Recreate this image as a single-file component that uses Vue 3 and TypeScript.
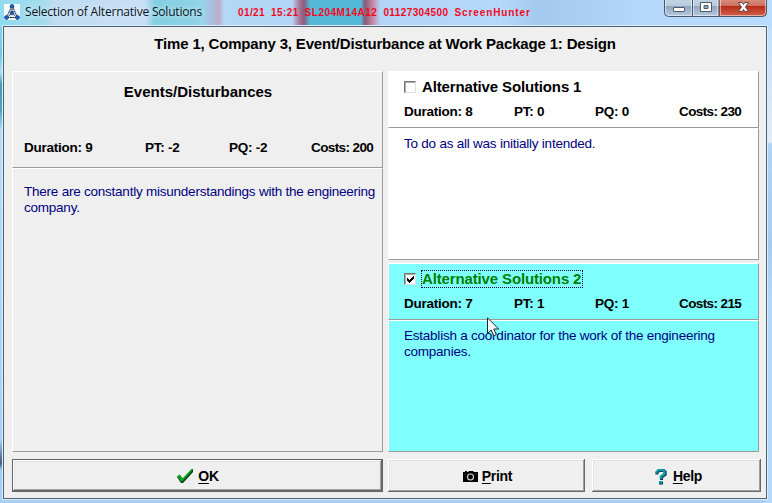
<script setup lang="ts">
import { ref } from 'vue'

interface Stat { label: string; value: number }
interface Solution { title: string; stats: Stat[]; text: string; checked: boolean }

const makeStats = (d: number, pt: number, pq: number, c: number): Stat[] => [
  { label: 'Duration', value: d },
  { label: 'PT', value: pt },
  { label: 'PQ', value: pq },
  { label: 'Costs', value: c },
]

const eventStats = makeStats(9, -2, -2, 200)

const solutions = ref<Solution[]>([
  { title: 'Alternative Solutions 1', stats: makeStats(8, 0, 0, 230), text: 'To do as all was initially intended.', checked: false },
  { title: 'Alternative Solutions 2', stats: makeStats(7, 1, 1, 215), text: 'Establish a coordinator for the work of the engineering companies.', checked: true },
])

function choose(index: number) {
  solutions.value.forEach((s, i) => { s.checked = i === index })
}
</script>

<template>
  <div class="window">
    <header class="titlebar">
      <svg class="app-icon" viewBox="0 0 16 16" width="16" height="16">
        <rect width="16" height="16" fill="#f4fbff" />
        <path d="M7.500 2.500 2.500 13.500H13.500L8.500 2.500M8 9 3 13.500M8 9l5 4.500M8 2v7" fill="none" stroke="#111a24" stroke-width="1" stroke-dasharray="2 .6" />
        <g fill="#1263c8" stroke="#082a66" stroke-width=".6">
          <circle cx="8" cy="2.300" r="1.900" /><circle cx="8" cy="9" r="1.900" />
          <circle cx="2.500" cy="13.500" r="2" /><circle cx="13.500" cy="13.500" r="2" />
        </g>
      </svg>
      <span class="caption">Selection of Alternative Solutions</span>
      <span class="stamp"><span>01/21</span><span>15:21</span><span class="code">SL204M14A12</span><span>01127304500</span><span class="tool">ScreenHunter</span></span>
      <svg class="controls" viewBox="0 0 104 18" width="104" height="18">
        <defs>
          <linearGradient id="glass" x1="0" y1="0" x2="0" y2="1">
            <stop offset="0" stop-color="#c3d3e3" /><stop offset=".38" stop-color="#b7cade" />
            <stop offset=".42" stop-color="#8fa6bf" /><stop offset="1" stop-color="#b4cbe2" />
          </linearGradient>
          <linearGradient id="red" x1="0" y1="0" x2="0" y2="1">
            <stop offset="0" stop-color="#d88f80" /><stop offset=".38" stop-color="#ce7060" />
            <stop offset=".42" stop-color="#b82c17" /><stop offset="1" stop-color="#d2634c" />
          </linearGradient>
        </defs>
        <path d="M.5-1V12.500Q.5 16.500 4.500 16.500H98.500Q102.500 16.500 102.500 12.500V-1Z" fill="url(#glass)" />
        <path d="M55-1H102.500V12.500Q102.500 16.500 98.500 16.500H55Z" fill="url(#red)" />
        <path d="M1.500 0V12Q1.500 15.500 5 15.500H27.500V0M29.500 0V15.500H53.500V0M56.500 0V15.500H98Q101.500 15.500 101.500 12V0" fill="none" stroke="#fff" stroke-opacity=".5" />
        <path d="M.5-1V12.500Q.5 16.500 4.500 16.500H98.500Q102.500 16.500 102.500 12.500V-1M28.500 0V16M55 0V16" fill="none" stroke="#4c5666" />
        <rect x="9.500" y="7.500" width="11" height="4" rx=".5" fill="#fff" stroke="#505a6a" />
        <path d="M36.500 2.500H47.500V11.500H36.500ZM40 5.500H44V8.500H40Z" fill="#fff" fill-rule="evenodd" stroke="#505a6a" />
        <path d="M74.500 2.500H78L79.500 4.500 81 2.500H84.500L81.500 7 84.500 11.500H81L79.500 9.500 78 11.500H74.500L77.500 7Z" fill="#fff" stroke="#5c4a50" />
      </svg>
    </header>

    <main class="client">
      <h1 class="heading">Time 1, Company 3, Event/Disturbance at Work Package 1: Design</h1>

      <div class="columns">
        <section class="stack">
          <div class="panel event-head">
            <h2 class="event-title">Events/Disturbances</h2>
            <div class="stats event-stats">
              <span v-for="s in eventStats" :key="s.label">{{ s.label }}: {{ s.value }}</span>
            </div>
          </div>
          <div class="panel event-body"><p class="text">There are constantly misunderstandings with the engineering company.</p></div>
        </section>

        <div class="solutions">
          <section v-for="(sol, i) in solutions" :key="sol.title" class="stack solution" :class="{ selected: sol.checked }">
            <div class="panel solution-head">
              <div class="choice" @click="choose(i)">
                <span class="box">
                  <svg v-if="sol.checked" viewBox="0 0 9 9" width="9" height="9" shape-rendering="crispEdges">
                    <path d="M1 3v3l2 2 5-5V0L3 5Z" fill="#000" />
                  </svg>
                </span>
                <span class="solution-title">{{ sol.title }}</span>
              </div>
              <div class="stats">
                <span v-for="s in sol.stats" :key="s.label">{{ s.label }}: {{ s.value }}</span>
              </div>
            </div>
            <div class="panel solution-body"><p class="text">{{ sol.text }}</p></div>
          </section>
        </div>
      </div>

      <footer class="buttons">
        <button class="btn ok">
          <svg viewBox="0 0 18 16" width="18" height="16">
            <path d="M1 9l3-2 3 4L16 1h1v3L7 15H5Z" fill="#053b12" />
            <path d="M1 8.500 3.500 6.500 6.500 10.500 15.500 1H16.500V2.500L6.500 13.500H5Z" fill="#08a018" />
          </svg>
          <span><u>O</u>K</span>
        </button>
        <button class="btn print">
          <svg viewBox="0 0 15 11" width="15" height="11">
            <path d="M0 1H2V0H4V1H5L6 0H10L11 1H15V11H0Z" fill="#000" />
            <circle cx="7.500" cy="6" r="3" fill="#000" stroke="#d8d8d8" stroke-width="1.100" />
            <path d="M1 3h2M12 3h2" stroke="#555" stroke-width=".6" />
          </svg>
          <span><u>P</u>rint</span>
        </button>
        <button class="btn help">
          <svg viewBox="0 0 12 17" width="12" height="17">
            <g fill="none" stroke-width="3">
              <path d="M2 6.500V4.500L4 2.500H8.500L10.200 4V6.500L6.500 9V12" stroke="#063a52" />
              <path d="M1.500 5.500V4L3.500 2H8L9.500 3.500V6L5.800 8.500V11" stroke="#079eaa" stroke-width="2.200" />
            </g>
            <rect x="4" y="13.500" width="4" height="3" fill="#063a52" /><rect x="4" y="13" width="3" height="2.500" fill="#079eaa" />
          </svg>
          <span><u>H</u>elp</span>
        </button>
      </footer>
    </main>

    <svg class="cursor" viewBox="0 0 13 20" width="13" height="20">
      <path d="M.5.8V16.500L4.200 13 6.700 18.700 9.300 17.600 6.800 12H11.700Z" fill="#fff" stroke="#1c2430" />
    </svg>
  </div>
</template>

<style>
body { margin: 0; overflow: hidden; }
</style>

<style scoped>
* { box-sizing: border-box; }
.window {
  position: relative;
  width: 772px;
  height: 503px;
  padding: 0 5px 4px 3px;
  font-family: "Liberation Sans", Arial, sans-serif;
  color: #000;
  background:
    linear-gradient(90deg, transparent 0 202px, #a99ab960 212px, #c87f9b80 219px, transparent 224px 292px, #a8708f 300px, #8a5c7c 304px, #54b9d6 310px 361px, #8a5873 365px, #c58ba5 373px, transparent 380px) 0 0 / 100% 25px no-repeat,
    linear-gradient(90deg, #8fdbee, #a5dcec 45px, #bfdcf2 55px, #c8dff5 145px, #82cfe2 155px, #8dd3e5 195px, #b4d7f5 220px, #b2d3f6 380px, #b6d8fb 500px, #a4c9ee 540px, #b5d8fb 650px, #b8dbff) 0 0 / 100% 27px no-repeat,
    linear-gradient(#93e0f3, #70cce3 55px, #b9dcee 72px, #459bb3 85px, #4aa6bd 110px, #badcf2 130px, #a9cff3 440px, #435c78 463px, #9fcdf2 470px, #a9cff1) 0 0 / 4px 100% no-repeat,
    linear-gradient(#b9dcff, #d7e7f6 100px, #e2edf7 142px, #b1d3f6 144px, #a6ccef 250px, #b5d7f8 300px, #b7d9fa) 100% 0 / 6px 100% no-repeat,
    #a9cff2;
}
.titlebar { height: 26px; display: flex; align-items: flex-start; }
.app-icon { margin: 4px 0 0 1px; flex: none; }
.caption {
  width: 213px; margin: 3px 0 0 5px; flex: none;
  font: 12px/18px "Open Sans", "Noto Sans", sans-serif;
  letter-spacing: -0.200px; white-space: nowrap; color: #07131d;
  text-shadow: 0 0 5px #fff9, 0 0 8px #fff8;
}
.stamp { display: flex; gap: 6px; margin-top: 5px; width: 426px; flex: none; font-size: 10px; line-height: 15px; font-weight: bold; color: #f20a1c; letter-spacing: .4px; white-space: nowrap; }
.code { letter-spacing: .5px; }
.tool { letter-spacing: .9px; }
.controls { flex: none; }
.client {
  width: 764px; height: 473px; padding: 0 4px 6px 8px;
  border: 1px solid #4d6278; background: #efefef;
  box-shadow: 0 0 0 1px #d9effc;
  display: flex; flex-direction: column;
}
.heading { margin: 0; height: 44px; padding: 8px 4px 0 0; text-align: center; font-size: 15px; line-height: 18px; font-weight: bold; letter-spacing: -.175px; white-space: nowrap; }
.columns { display: grid; grid-template-columns: 371px 371px; gap: 5px; height: 381px; }
.stack { display: flex; flex-direction: column; }
.panel { border: 1px solid; border-color: #fff #9a9a9a #9a9a9a #fff; }
.event-head { height: 97px; padding-left: 11px; }
.event-body { height: 284px; padding: 15px 0 0 11px; }
.event-title { margin: 0; padding: 11px 10px 0 0; height: 67px; font-size: 15px; line-height: 18px; text-align: center; }
.stats { display: grid; grid-template-columns: 110px 81px 84px 80px; font-size: 13.500px; line-height: 18px; font-weight: bold; letter-spacing: -.25px; white-space: nowrap; }
.stats span:last-child { letter-spacing: -.6px; }
.event-stats { grid-template-columns: 121px 84px 82px 70px; }
.text { margin: 0; font-size: 13.500px; line-height: 16px; color: #000080; letter-spacing: -.23px; }
.solutions { display: flex; flex-direction: column; gap: 3px; }
.solution { background: #fff; }
.solution.selected { background: #80ffff; }
.solution-head { height: 57px; padding: 5px 0 0 15px; }
.solution-body { height: 132px; padding: 7px 20px 0 15px; }
.choice { display: flex; align-items: center; height: 20px; margin-bottom: 6px; }
.box { width: 12px; height: 12px; margin-right: 6px; display: grid; place-items: center; background: #fff; border: 1px solid; border-color: #777 #ddd #ddd #777; box-shadow: inset 1px 1px #aaa; }
.solution-title { padding: 0 1px 0 0; font-size: 15px; line-height: 16px; font-weight: bold; letter-spacing: -.14px; white-space: nowrap; }
.selected .solution-title { color: #008000; outline: 1px dotted #000040; }
.buttons { display: flex; margin-top: 7px; height: 33px; }
.btn {
  flex: none; display: flex; align-items: center; justify-content: center; padding: 1px 0 0; border: 0;
  background: #efefef; color: #000; font: bold 14px/18px "Liberation Sans", Arial, sans-serif; letter-spacing: -.3px;
  box-shadow: inset -1px -1px #696969, inset 1px 1px #fff, inset -2px -2px #a0a0a0, inset 2px 2px #e3e3e3;
}
.btn u { text-underline-offset: 2px; text-decoration-thickness: 1px; }
.ok { width: 371px; margin-right: 5px; gap: 4px; border: 1px solid #646464; }
.print { width: 197px; margin-right: 7px; padding-left: 2px; gap: 4px; }
.help { width: 169px; padding-left: 4px; gap: 6px; }
.cursor { position: absolute; left: 487px; top: 317px; }
</style>
